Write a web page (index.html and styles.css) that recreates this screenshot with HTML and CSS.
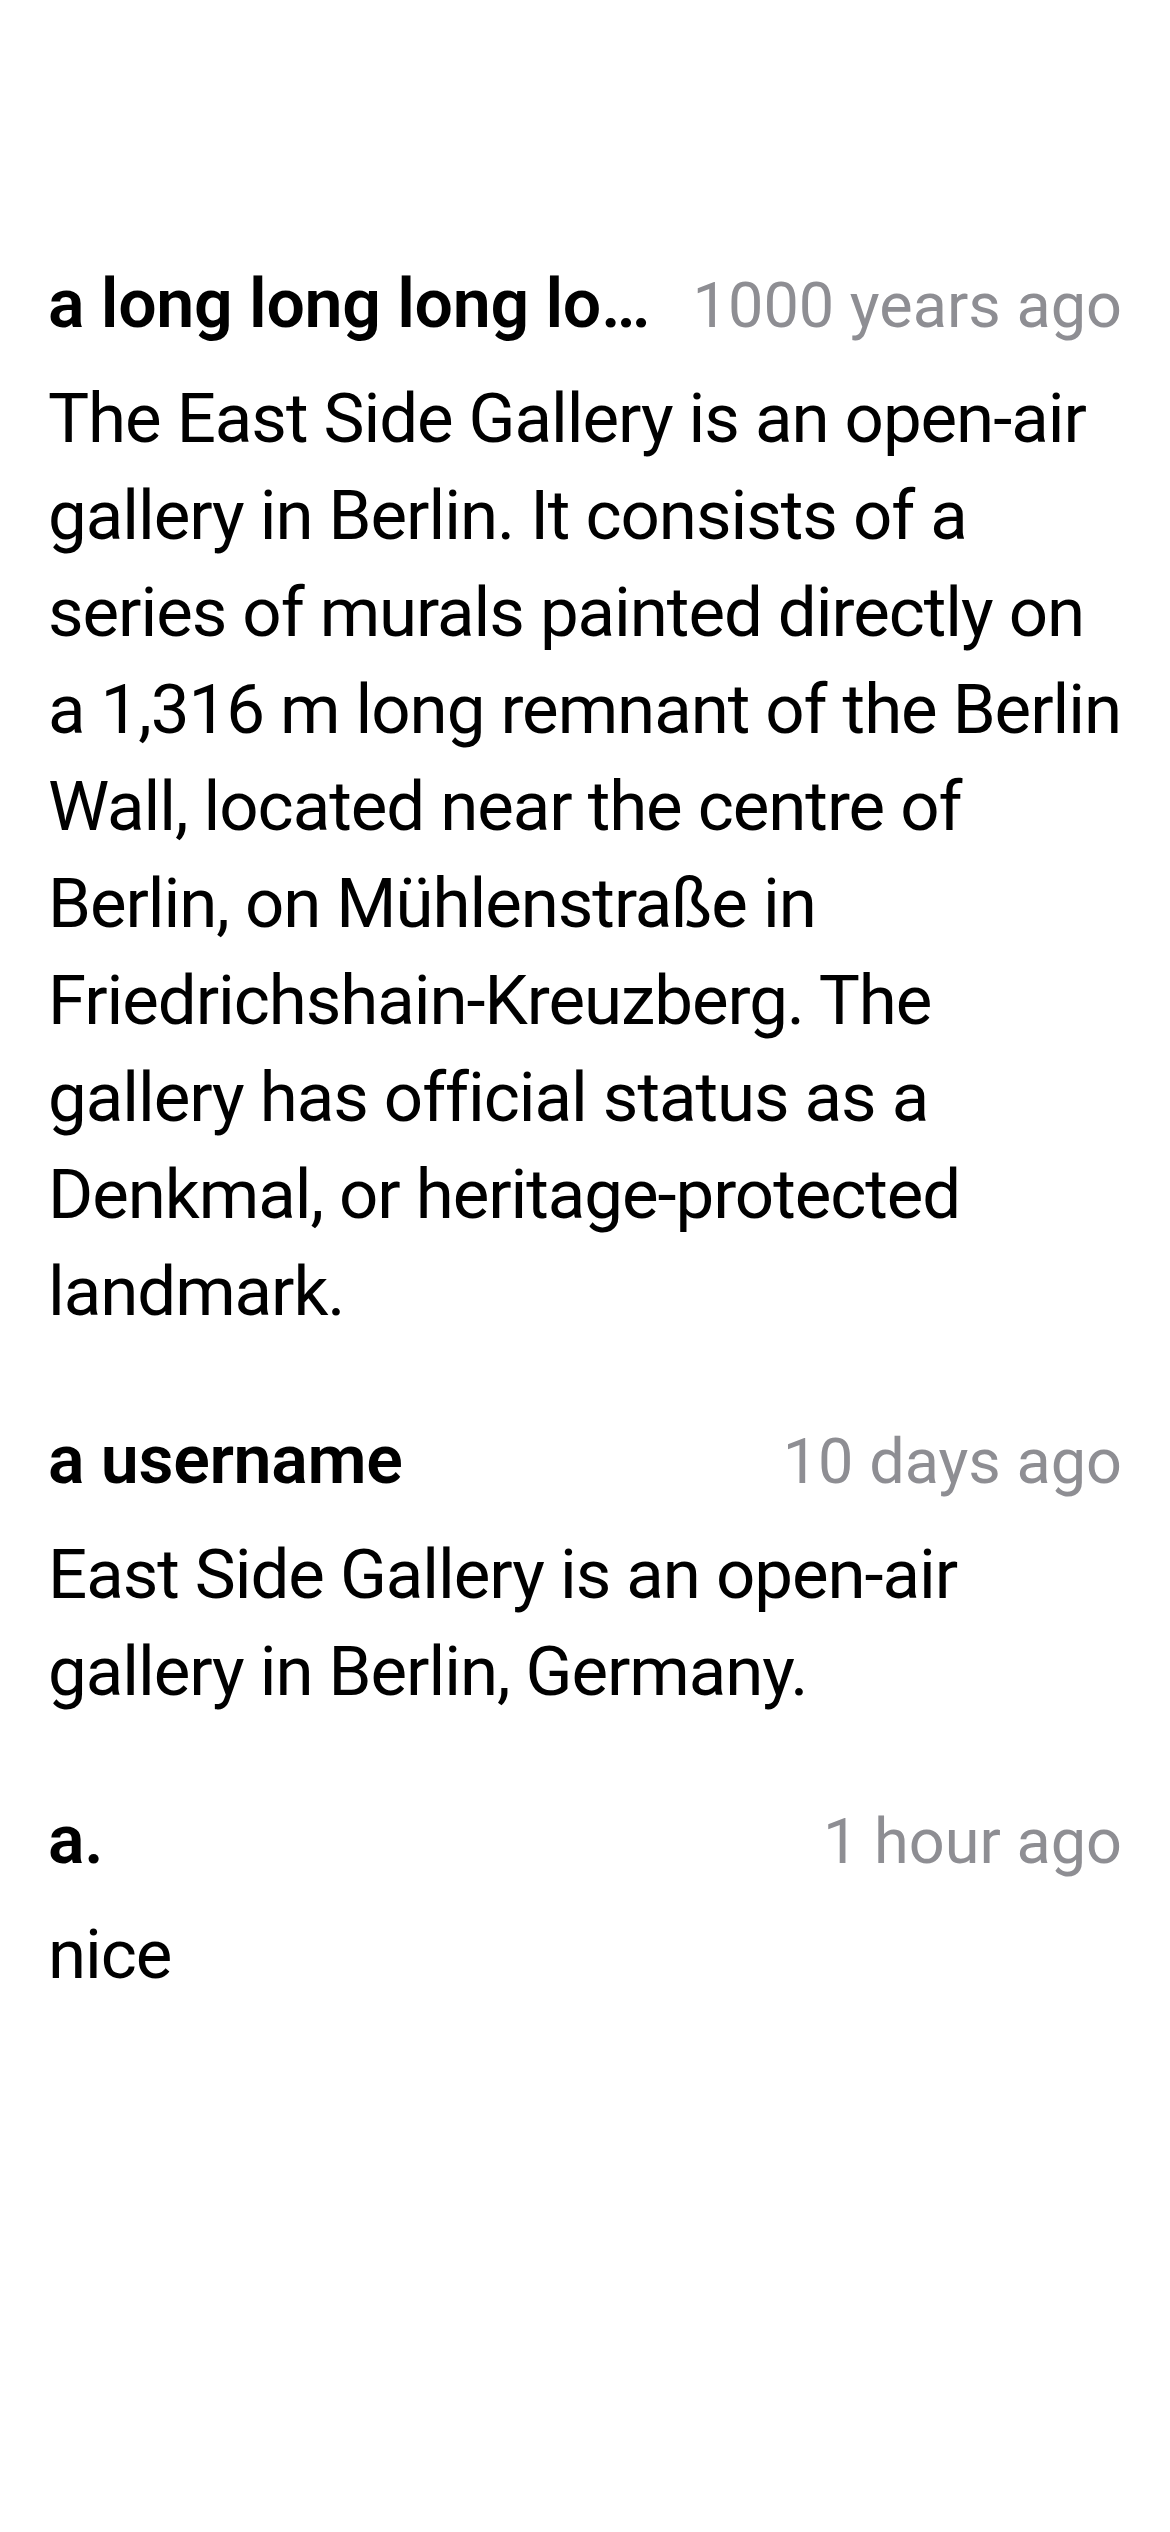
FILE: index.html
```html
<!DOCTYPE html>
<html lang="en">
<head>
<meta charset="utf-8">
<title>Comments</title>
<link rel="stylesheet" href="styles.css">
</head>
<body>
<main class="comments">
  <article class="comment">
    <header class="comment-head">
      <span class="comment-user">a long long long long long long long username</span>
      <span class="comment-time">1000 years ago</span>
    </header>
    <p class="comment-text">The East Side Gallery is an open-air gallery in Berlin. It consists of a series of murals painted directly on a 1,316 m long remnant of the Berlin Wall, located near the centre of Berlin, on Mühlenstraße in Friedrichshain-Kreuzberg. The gallery has official status as a Denkmal, or heritage-protected landmark.</p>
  </article>
  <article class="comment">
    <header class="comment-head">
      <span class="comment-user">a username</span>
      <span class="comment-time">10 days ago</span>
    </header>
    <p class="comment-text">East Side Gallery is an open-air gallery in Berlin, Germany.</p>
  </article>
  <article class="comment">
    <header class="comment-head">
      <span class="comment-user">a.</span>
      <span class="comment-time">1 hour ago</span>
    </header>
    <p class="comment-text">nice</p>
  </article>
</main>
</body>
</html>
```

FILE: styles.css
```css
html, body {
  margin: 0;
  padding: 0;
  background: #ffffff;
}

body {
  width: 1170px;
  min-height: 2532px;
  font-family: Roboto, "Noto Sans", "Liberation Sans", sans-serif;
  color: #000000;
}

.comments {
  display: flex;
  flex-direction: column;
  gap: 80px;
  padding: 264px 48px 0 48px;
}

.comment {
  display: flex;
  flex-direction: column;
}

.comment-head {
  display: flex;
  align-items: baseline;
  gap: 42px;
  height: 80px;
  line-height: 80px;
}

.comment-user {
  flex: 1 1 auto;
  min-width: 0;
  font-size: 68px;
  font-weight: 600;
  letter-spacing: -0.3px;
  white-space: nowrap;
  overflow: hidden;
  text-overflow: ellipsis;
}

.comment-time {
  flex: 0 0 auto;
  font-size: 63px;
  font-weight: 400;
  color: #8e8e93;
  letter-spacing: 0;
  white-space: nowrap;
}

.comment-text {
  margin: 26px 0 0 0;
  font-size: 69px;
  line-height: 97px;
  font-weight: 400;
  letter-spacing: -1.05px;
}
```
